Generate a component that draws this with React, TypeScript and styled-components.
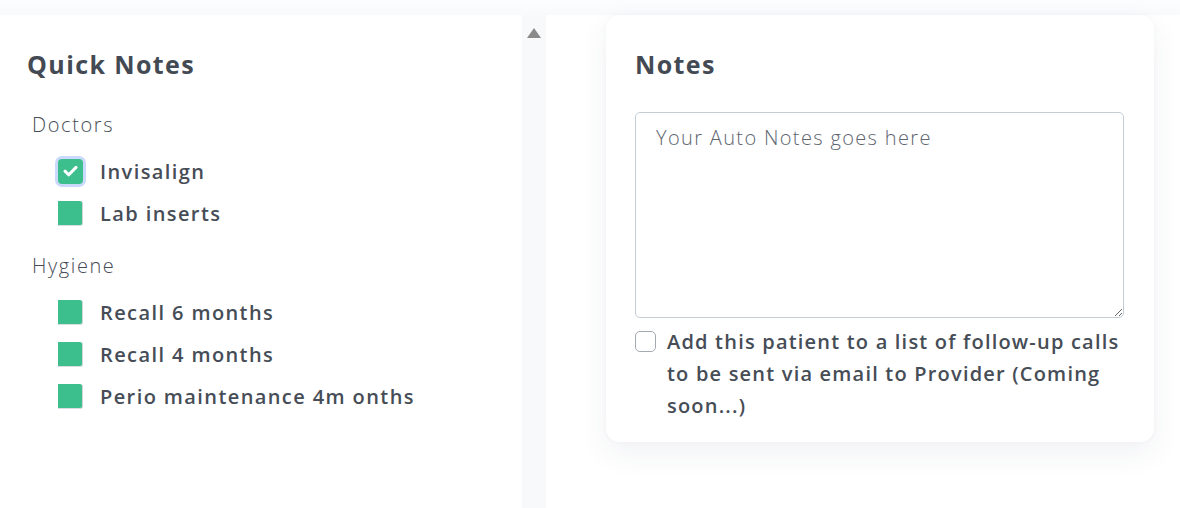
import React from "react";
import styled, { createGlobalStyle } from "styled-components";

const Global = createGlobalStyle`
  html, body { margin: 0; padding: 0; background: #ffffff; }
  body { font-family: "Open Sans", "Liberation Sans", sans-serif; color: #454c55; }
  * { box-sizing: border-box; }
`;

const Page = styled.div`
  width: 1180px;
  height: 508px;
  overflow: hidden;
  display: flex;
  flex-direction: column;
  background: #fff;
`;

const TopEdge = styled.div`
  height: 15px;
  flex: none;
  background: linear-gradient(#fcfdfe, #f8fafc);
`;

const Body = styled.div`
  flex: 1;
  display: grid;
  grid-template-columns: 522px 24px 1fr;
`;

const LeftPane = styled.section`
  padding: 33px 0 0 27px;
`;

const Scrollbar = styled.div`
  background: #f8f9fa;
  display: flex;
  justify-content: center;
  padding-top: 13px;
`;

const Arrow = styled.div`
  width: 0;
  height: 0;
  border-left: 7px solid transparent;
  border-right: 7px solid transparent;
  border-bottom: 10px solid #8a8a8a;
  margin-left: -1px;
`;

const RightArea = styled.div`
  padding: 0 26px 0 60px;
`;

const Card = styled.section`
  background: #fff;
  border-radius: 14px;
  box-shadow: 0 12px 30px rgba(40, 60, 110, 0.065), 0 0 6px rgba(40, 60, 110, 0.03);
  padding: 33px 30px 20px 29px;
`;

const Heading = styled.h2`
  margin: 0;
  font-size: 25px;
  line-height: 32px;
  font-weight: 700;
  color: #434a53;
  letter-spacing: 1.4px;
`;

const Category = styled.div`
  margin: 33px 0 0 5px;
  font-size: 20px;
  line-height: 24px;
  font-weight: 300;
  color: #464d56;
  letter-spacing: 1.6px;
`;

const ItemList = styled.div`
  display: flex;
  flex-direction: column;
  gap: 16px;
  margin: 21px 0 0 31px;
  & + ${Category} { margin-top: 28px; }
`;

const Item = styled.label`
  display: flex;
  align-items: center;
  gap: 17px;
  height: 26px;
  font-size: 20px;
  font-weight: 600;
  color: #464d56;
  letter-spacing: 1.4px;
`;

const GreenBox = styled.span<{ $checked?: boolean }>`
  width: 25px;
  height: 25px;
  flex: none;
  display: flex;
  align-items: center;
  justify-content: center;
  background: #3dbe8d;
  ${(p) =>
    p.$checked
      ? `border-radius: 4px; box-shadow: 0 0 0 3px #cbdafc;`
      : `border-right: 1px solid #d2d6da; border-bottom: 1px solid #d9dde1; border-radius: 0 3px 3px 0;`}
`;

const TextArea = styled.textarea`
  display: block;
  width: 100%;
  height: 206px;
  margin-top: 32px;
  border: 1px solid #c3cdd6;
  border-radius: 5px;
  padding: 10px 20px;
  font-family: "Open Sans", "Liberation Sans", sans-serif;
  font-size: 20px;
  font-weight: 300;
  line-height: 30px;
  letter-spacing: 1.35px;
  color: #454c55;
  outline: none;
  &::placeholder { color: #5e6570; opacity: 1; }
`;

const FollowRow = styled.label`
  display: flex;
  align-items: flex-start;
  gap: 11px;
  margin-top: 8px;
`;

const EmptyBox = styled.span`
  width: 21px;
  height: 21px;
  flex: none;
  margin-top: 5px;
  border: 1px solid #a4aab2;
  border-radius: 5px;
  background: #fff;
`;

const FollowText = styled.span`
  font-size: 20px;
  line-height: 32px;
  font-weight: 600;
  color: #464d56;
  letter-spacing: 1.2px;
`;

const Check = () => (
  <svg width="15" height="12" viewBox="0 0 15 12" fill="none">
    <path d="M2 6.2 L5.8 9.8 L13 2.4" stroke="#fff" strokeWidth="3" strokeLinecap="round" strokeLinejoin="round" />
  </svg>
);

const groups = [
  { name: "Doctors", items: [{ label: "Invisalign", checked: true }, { label: "Lab inserts" }] },
  {
    name: "Hygiene",
    items: [{ label: "Recall 6 months" }, { label: "Recall 4 months" }, { label: "Perio maintenance 4m onths" }],
  },
];

export default function App() {
  return (
    <Page>
      <Global />
      <TopEdge />
      <Body>
        <LeftPane>
          <Heading>Quick Notes</Heading>
          {groups.map((g) => (
            <React.Fragment key={g.name}>
              <Category>{g.name}</Category>
              <ItemList>
                {g.items.map((it: { label: string; checked?: boolean }) => (
                  <Item key={it.label}>
                    <GreenBox $checked={it.checked}>{it.checked && <Check />}</GreenBox>
                    {it.label}
                  </Item>
                ))}
              </ItemList>
            </React.Fragment>
          ))}
        </LeftPane>
        <Scrollbar>
          <Arrow />
        </Scrollbar>
        <RightArea>
          <Card>
            <Heading>Notes</Heading>
            <TextArea placeholder="Your Auto Notes goes here" />
            <FollowRow>
              <EmptyBox />
              <FollowText>
                Add this patient to a list of follow-up calls to be sent via email to Provider (Coming soon...)
              </FollowText>
            </FollowRow>
          </Card>
        </RightArea>
      </Body>
    </Page>
  );
}
